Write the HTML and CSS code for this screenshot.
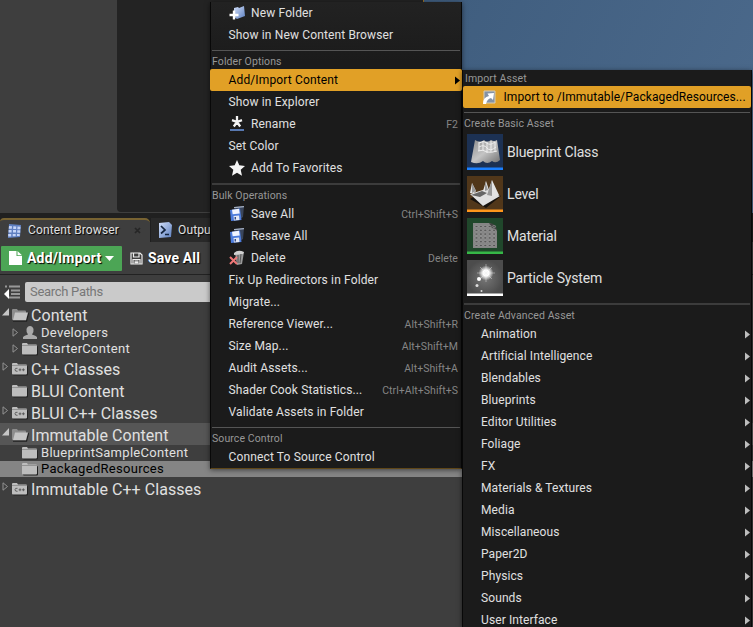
FILE: index.html
```html
<!DOCTYPE html>
<html lang="en"><head><meta charset="utf-8"><title>Content Browser</title><link rel="stylesheet" href="styles.css"></head>
<body>
<svg class="defs" width="0" height="0"><defs>
<linearGradient id="blue" x2="1" y2="1"><stop stop-color="#d3e0fa"/><stop offset="1" stop-color="#5c7fc0"/></linearGradient>
<linearGradient id="paper" x2="1" y2="1"><stop stop-color="#8c8c8c"/><stop offset=".5" stop-color="#c4c4c4"/><stop offset="1" stop-color="#707070"/></linearGradient>
<radialGradient id="glow"><stop stop-color="#fff"/><stop offset=".4" stop-color="#fff"/><stop offset="1" stop-color="#fff" stop-opacity="0"/></radialGradient>
<radialGradient id="haze"><stop stop-color="#777"/><stop offset="1" stop-color="#4c4c4c"/></radialGradient>
<symbol id="folder" viewBox="0 0 18 14"><path d="M1 3q0-1 1-1h4l1 1.500h8q1 0 1 1V12q0 1-1 1H2q-1 0-1-1z" fill="#222" transform="translate(1 .6)"/><path d="M1 2q0-1 1-1h4l1 1.500h8q1 0 1 1V11.500q0 1-1 1H2q-1 0-1-1z" fill="#bdbdbd"/><path d="M1 3.500h15" stroke="#777" stroke-width=".6"/></symbol>
<symbol id="open" viewBox="0 0 18 14"><path d="M1 2q0-1 1-1h4l1 1.500h7q1 0 1 1V12H2q-1 0-1-1z" fill="#8d8d8d"/><path d="M2 13h13.500L17.500 5" fill="none" stroke="#222" stroke-width="1.300"/><path d="M4 4.500h13L15 12.300H2z" fill="#c4c4c4"/></symbol>
<symbol id="cpp" viewBox="0 0 18 14"><use href="#folder"/><path d="M6.500 6.300Q4 5.800 4 7.700T6.500 9.300M7.600 7.800h2.800M9 6.400v2.800M11 7.800h2.800M12.400 6.400v2.800" fill="none" stroke="#555" stroke-width=".9"/></symbol>
<symbol id="user" viewBox="0 0 18 14"><path d="M2 13v-2q1-1.500 5-2.500Q5 6.500 5.500 3q1-3 3.500-3t3.500 3q.5 3.500-1.500 5.500 4 1 5 2.500v2z" fill="#aaa"/></symbol>
<symbol id="disks" viewBox="0 0 16 16"><path d="M5 1l10-1-1 11-3 2z" fill="#3a465c"/><path d="M5 1l10-1-.1 1.300L5 2.300z" fill="#a8b3c5"/><path d="M1 4l10-1.500 1.500 11.500L2 15z" fill="#4c7cdc"/><path d="M3 3.800l7-1 .7 4.700-7 .7z" fill="#f1f5ff"/><path d="M4.500 10l5.500-.5.5 4.500-5.500.5z" fill="#e2e8f5"/><path d="M5.500 11h1.500v2.500H5.600z" fill="#334b83"/></symbol>
</defs></svg>
<div class="app">
<div class="backdrop"><div class="side"></div><div class="stage"></div><div class="edge"></div><div class="sky"></div></div>
<div class="tabs"><div class="tab on"><svg width="17" height="16" viewBox="0 0 17 16"><path d="M3 1l12 1-1 12-12 1z" fill="#5f7fc0"/><path d="M3 3l3 .2-.2 2.500-3 0zM7.300 3.200l3 .2-.2 2.500H7.200zM11.500 3.500l3 .2-.2 2.500h-3zM2.600 7h3v2.500h-3zM7 7h3v2.500H7zM11.200 7.300h3v2.400h-3zM2.200 11h3v2.500h-3zM6.700 11h3v2.300h-3zM11 11h2.700v2H11z" fill="#c5d4f6"/></svg><span>Content Browser</span><i><svg width="7" height="7" viewBox="0 0 7 7"><path d="M1 1l5 5M6 1L1 6" stroke="#262626" stroke-width="1.700"/></svg></i></div><div class="tab off"><svg width="16" height="16" viewBox="0 0 16 16"><path d="M2 1l10-1 3 3-1 12-12 1z" fill="url(#blue)"/><path d="M4 4l4 4-4 3.500M8 12.500h4" fill="none" stroke="#14253f" stroke-width="1.700"/></svg><span>Output Log</span></div></div>
<div class="tools"><div class="add"><svg width="13" height="15" viewBox="0 0 13 15"><path d="M0 0h7.500v5H13v9H0zM8.500 0L13 4.200H8.500z" fill="#fff"/></svg><b>Add/Import</b><svg width="9" height="5" viewBox="0 0 9 5"><path d="M0 0h9L4.500 5z" fill="#fff"/></svg></div><svg width="13" height="13" viewBox="0 0 13 13"><path d="M1 1h9l2 2v9H1zM3.500 1v4h5.500V1M3 12V7.500h7V12M4.500 9.200h4M4.500 10.700h4" fill="none" stroke="#eee" stroke-width="1.200"/></svg><b>Save All</b></div>
<div class="search"><svg width="17" height="15" viewBox="0 0 17 15"><path d="M1 1.500h2M5 1.500h11M7 5.500h9M7 9h9M5 12.500h11" stroke="#999" stroke-width="1.800"/><path d="M0 9l5-5v10z" fill="#fff"/></svg><div class="box">Search Paths</div></div>
<div class="tree" id="tree"></div>
</div>
<div class="menu" id="menu"></div>
<div class="menu sub" id="sub"></div>
<script src="app.js"></script>
</body></html>
```
FILE: styles.css
```css
body{margin:0;background:#3e3e3e;font-family:Roboto,"Liberation Sans",sans-serif;color:#e0e0e0;font-size:13px;overflow:hidden}
.defs{position:absolute}
svg{flex:none;display:block}
.app{height:627px;display:flex;flex-direction:column;background:#3e3e3e}
.backdrop{display:flex;height:213px;flex:none;background:#3e3e3e;border-bottom:5px solid #202020}
.side{width:117px;flex:none}
.stage{width:306px;background:#232323;border-radius:0 0 0 4px;flex:none;margin-bottom:1px}
.edge{width:1px;background:#987027}
.sky{flex:1;background:linear-gradient(115deg,#3f5d7e,#4c6a8c)}
.tabs{display:flex;height:24px;background:#1f1f1f;flex:none}
.tab{display:flex;align-items:center;box-sizing:border-box;height:24px;text-shadow:1px 1px 1px #000;white-space:nowrap;font-size:12px;letter-spacing:.13px}
.on{width:150px;background:#3e3e3e;border-top:2px solid #786332;border-radius:4px 5px 0 0;padding:0 0 1px 6px}
.on span{margin:0 0 2px 5px}
.on i{margin-left:15px}
.off{margin-left:1px;width:100px;background:#292929;padding:0 0 1px 6px}
.off span{margin-left:5px}
.tools{display:flex;height:33px;align-items:center;border-bottom:1px solid #222;flex:none;text-shadow:1px 1px 1px #000;color:#fff;font-size:14px;box-sizing:border-box}
.tools b{font-weight:700}
.add{width:121px;height:25px;background:#4ca555;margin:0 8px 0 1px;display:flex;align-items:center;padding-left:8px;box-sizing:border-box;border-radius:1px}
.add b{margin:0 4px 0 5px;letter-spacing:.18px}
.tools>b{margin-left:5px;letter-spacing:.15px}
.search{display:flex;height:28px;align-items:center;flex:none;padding:6px 0 0 4px;box-sizing:border-box}
.box{margin-left:4px;width:450px;height:20px;line-height:20px;background:#cacaca;color:#777;border-radius:2px;padding-left:5px;letter-spacing:-.3px;margin-top:-1px}
.row{display:flex;align-items:center;height:22px;font-size:16px;white-space:nowrap;box-sizing:border-box;padding:3px 0 0 2px;letter-spacing:.05px}
.row .exp{width:9px;margin-top:-6px}
.row>svg{margin-top:-1px}
.row span{margin-left:2px}
.row.small{height:16px;font-size:13px;padding:0 0 1px 12px;letter-spacing:.29px}
.small .exp{margin-top:-1px}
.small>svg{margin-top:0}
.row.parent{background:#565656}
.row.selected{background:#858585;color:#000}
.menu{position:absolute;left:210px;top:2px;width:252px;height:467px;box-sizing:border-box;background:linear-gradient(#222,#1b1b1b 60px);border:1px solid #080808;border-top:0;border-bottom-color:#604718;box-shadow:0 1px 5px #0008;letter-spacing:.14px;font-size:12px}
.sub{left:462px;top:70px;width:290px;height:557px;border-bottom:0;background:#1b1b1b}
.item{height:22px;display:flex;align-items:center;padding:0 3px 0 17.5px;white-space:nowrap}
.item .pic{width:16px;margin-right:6.5px}
.item .label{flex:1}
.item small{font-size:10.5px;color:#858585;letter-spacing:.05px}
.hot{background:#e1a026;color:#000;border-radius:2px}
.lead{margin:0 -1px;padding:0 2px 0 18.5px}
.head{height:23px;box-sizing:border-box;padding:4px 1px 0;font-size:10.5px;color:#979797;line-height:17px;letter-spacing:.1px}
.tall{height:24px}
.head div{border-top:1px solid #555;padding-top:2px}
.head.tall div{border-top:2px solid #3c3c3c;padding-top:2px}
.sub .first{height:16px;padding:0 2px}
.sub .item{padding-left:18px;padding-right:1px;letter-spacing:.1px}
.sub .hot .label{flex:none}
.asset{height:42px;display:flex;align-items:center;padding-left:4px;font-size:14px;letter-spacing:-.16px;gap:4px;box-sizing:border-box}
.tile{width:36px;height:36px}
```
FILE: app.js
```js
const svg = (w, h, body, vb) => `<svg width="${w}" height="${h}" viewBox="${vb || `0 0 ${w} ${h}`}">${body}</svg>`;
const use = id => svg(18, 14, `<use href="#${id}"/>`);
const open = svg(9, 9, '<path d="M0 7.500L7 0v7.500z" fill="#c6c6c6"/>');
const closed = svg(9, 9, '<path d="M1 .8L5.500 4.500 1 8.200z" fill="none" stroke="#929292"/>');
document.getElementById('tree').innerHTML = [
  ['Content','open',open,''],['Developers','user',closed,'small'],['StarterContent','folder',closed,'small'],['C++ Classes','cpp',closed,''],['BLUI Content','folder','',''],['BLUI C++ Classes','cpp',closed,''],['Immutable Content','open',open,'parent'],['BlueprintSampleContent','folder','','small'],['PackagedResources','folder','','small selected'],['Immutable C++ Classes','cpp',closed,'']
].map(([t,i,e,c]) => `<div class="row ${c}"><div class="exp">${e}</div>${use(i)}<span>${t}</span></div>`).join('');
const disks = svg(16, 16, '<use href="#disks"/>');
const pics = {
  add: svg(16,16,'<path d="M5 3l4-1 1 1 5-2 1 10-8 3-3-2z" fill="url(#blue)"/><path d="M5 5.500v9M.5 10h9" stroke="#fff" stroke-width="2.400"/>'),
  rename: svg(16,16,'<path d="M8 0v6M8 6L3 4.200M8 6l5-1.800M8 6l-3.200 4.500M8 6l3.200 4.500" stroke="#f4f4f4" stroke-width="2.300"/><path d="M1 14h14" stroke="#5878b0" stroke-width="2"/>'),
  star: svg(16,16,'<path d="M8 0l2.300 5.300 5.700.6-4.300 3.900 1.300 6L8 12.700 3 15.800l1.300-6L0 5.900l5.700-.6z" fill="#f5f5f5"/>'),
  trash: svg(16,16,'<path d="M6 3l9-1-2 12-5 1z" fill="#999"/><path d="M5 3q4-4 10-1l-1 2-9 1z" fill="#d1d1d1"/><path d="M9 5v8M12 4l-1 9" stroke="#555"/><path d="M1 7l7 7M8 7l-7 7" stroke="#ee7777" stroke-width="2"/>'),
  imp: svg(16,16,'<path d="M3 2h11v12H3z" fill="#8492a5" stroke="#d8cdb4"/><path d="M2 15Q2 8 8 7L6.500 4.500 13 4l-1 7-2-2q-4 1-5 6z" fill="#fff"/>')
};
const arrow = c => svg(5, 9, `<path d="M0 .5L5 4.500 0 8.500z" fill="${c}"/>`);
const head = (t, c = '') => `<div class="head ${c}"><div>${t}</div></div>`;
const item = (t, pic = '', key = '', c = '', tail = '') => `<div class="item ${c}">${pic ? `<div class="pic">${pic}</div>` : ''}<span class="label">${t}</span>${key ? `<small>${key}</small>` : ''}${tail}</div>`;
document.getElementById('menu').innerHTML =
  item('New Folder',pics.add)+item('Show in New Content Browser')+head('Folder Options')+item('Add/Import Content','','','hot lead',arrow('#000'))+item('Show in Explorer')+item('Rename',pics.rename,'F2')+item('Set Color')+item('Add To Favorites',pics.star)+head('Bulk Operations','tall')+item('Save All',disks,'Ctrl+Shift+S')+item('Resave All',disks)+item('Delete',pics.trash,'Delete')+item('Fix Up Redirectors in Folder')+item('Migrate...')+item('Reference Viewer...','','Alt+Shift+R')+item('Size Map...','','Alt+Shift+M')+item('Audit Assets...','','Alt+Shift+A')+item('Shader Cook Statistics...','','Ctrl+Alt+Shift+S')+item('Validate Assets in Folder')+head('Source Control')+item('Connect To Source Control');
const dots = [...Array(30)].map((_, i) => `<rect x="${8+i%5*4.400}" y="${7.5+Math.floor(i/5)*3.800}" width="3" height="2" rx="1" fill="#555" stroke="#aaa" stroke-width=".5"/>`).join('');
const tiles = [
 ['Blueprint Class','#1c3153','#1b80ff','<path d="M8 6q5 3 9 0 3 3 7 0 3 2 6 0l3 20q-4 4-8 1-5 4-9 0-5 4-12 1z" fill="url(#paper)"/><path d="M12 8v9M11 17q5-2 9 1 4 1 10-1M16 7v10M20 8v11M24 7v11M28 8v10M12 9q5-3 8 0t8-1M12 13q5-3 8 1t9-1" stroke="#eee" fill="none"/>'],
 ['Level','#51371a','#ff961c','<path d="M3 23l16 9 15-12-15-7z" fill="#17120d"/><path d="M3 18l16-5 14 7-17 10z" fill="#e0e0e0"/><path d="M3 17l2-10 4 8-2 2zM16 15l3-10 3 9zM20 19l5-15 7 15q-6 3-12 0z" fill="#e4e4e4"/><path d="M5 7v10l4-2zM18 5v10l3-1zM25 4v16l-5-1z" fill="#999"/><path d="M4 19l11-4 5 2-7 4z" fill="#666"/>'],
 ['Material','#20472b','#36b747','<path d="M6 5h17l7 7v18H6z" fill="#858585"/><path d="M22 5q7 0 8 8-2-3-5-3z" fill="#444"/>'+dots],
 ['Particle System','url(#haze)','#fff','<circle cx="19" cy="13" r="7.500" fill="url(#glow)"/><path d="M19 4v18M10 13h18M13 7l12 12M25 7L13 19" stroke="#eee" stroke-width=".7" opacity=".6"/><circle cx="12" cy="19" r="2" fill="#fff"/><circle cx="10" cy="25.500" r="1.500" fill="#ddd"/><circle cx="14.500" cy="31" r="1" fill="#ddd"/>']
];
document.getElementById('sub').innerHTML =
 '<div class="head first">Import Asset</div>'+item('Import to /Immutable/PackagedResources...',pics.imp,'','hot')+head('Create Basic Asset')+
 tiles.map(([t,bg,c,art]) => `<div class="asset"><div class="tile">${svg(36,36,`<path d="M0 0h36v36H0z" fill="${bg}"/>${art}<path d="M0 33.500h36v2.500H0z" fill="${c}"/>`)}</div>${t}</div>`).join('')+
 head('Create Advanced Asset','tall')+['Animation','Artificial Intelligence','Blendables','Blueprints','Editor Utilities','Foliage','FX','Materials &amp; Textures','Media','Miscellaneous','Paper2D','Physics','Sounds','User Interface'].map(t=>item(t,'','','',arrow('#bdbdbd'))).join('');
```
